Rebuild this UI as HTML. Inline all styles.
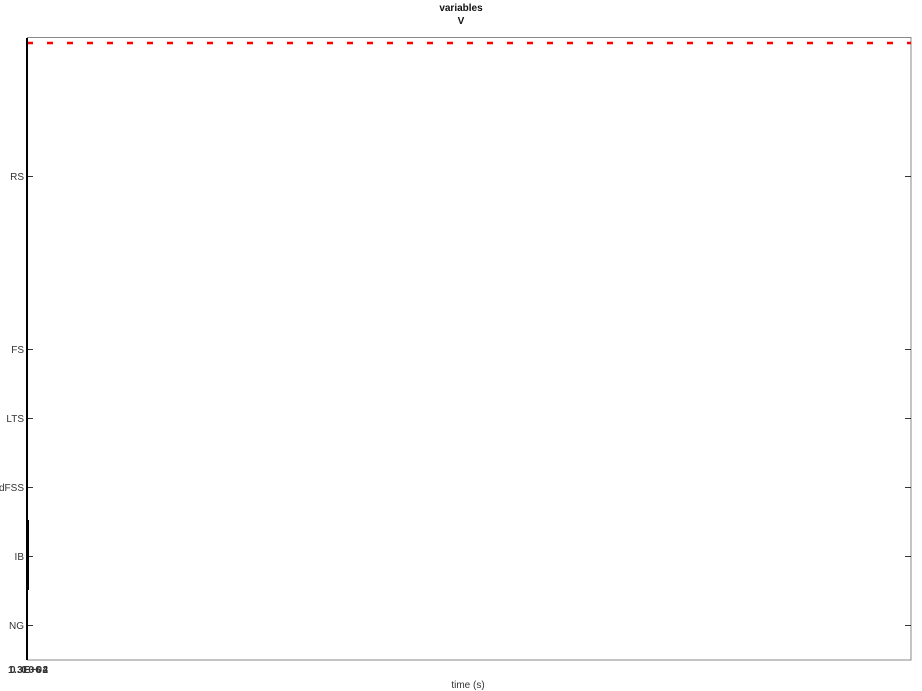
<!DOCTYPE html>
<html><head><meta charset="utf-8"><style>
html,body{margin:0;padding:0;background:#fff;}
svg{display:block;font-family:"Liberation Sans",sans-serif;}
</style></head><body>
<svg width="922" height="691" viewBox="0 0 922 691" xmlns="http://www.w3.org/2000/svg">
<rect x="0" y="0" width="922" height="691" fill="#fff"/>
<text x="461" y="11" font-size="10" font-weight="bold" text-anchor="middle" fill="#111">variables</text>
<text x="461" y="24" font-size="10" font-weight="bold" text-anchor="middle" fill="#111">V</text>
<rect x="27.5" y="37.5" width="883.5" height="622.5" fill="none" stroke="#888" stroke-width="1"/>
<g stroke="#333" stroke-width="1">
<line x1="27" y1="176.5" x2="33" y2="176.5"/><line x1="905" y1="176.5" x2="911" y2="176.5"/>
<line x1="27" y1="349.5" x2="33" y2="349.5"/><line x1="905" y1="349.5" x2="911" y2="349.5"/>
<line x1="27" y1="418.5" x2="33" y2="418.5"/><line x1="905" y1="418.5" x2="911" y2="418.5"/>
<line x1="27" y1="487.5" x2="33" y2="487.5"/><line x1="905" y1="487.5" x2="911" y2="487.5"/>
<line x1="27" y1="556.5" x2="33" y2="556.5"/><line x1="905" y1="556.5" x2="911" y2="556.5"/>
<line x1="27" y1="625.5" x2="33" y2="625.5"/><line x1="905" y1="625.5" x2="911" y2="625.5"/>
</g>
<line x1="27" y1="43" x2="911" y2="43" stroke="#f00" stroke-width="2.5" stroke-dasharray="6 14"/>
<line x1="27" y1="38" x2="27" y2="660" stroke="#000" stroke-width="2"/>
<line x1="27.5" y1="520" x2="27.5" y2="590" stroke="#000" stroke-width="3"/>
<g font-size="10" text-anchor="end" fill="#333">
<text x="24" y="180">RS</text>
<text x="24" y="353">FS</text>
<text x="24" y="422">LTS</text>
<text x="24" y="491">dFSS</text>
<text x="24" y="560">IB</text>
<text x="24" y="629">NG</text>
</g>
<g font-size="10" font-weight="bold" fill="#333">
<text x="8" y="673" textLength="40">1.3E+04</text>
<text x="10" y="673" textLength="38">0.0062</text>
</g>
<text x="468" y="688" font-size="10" text-anchor="middle" fill="#333">time (s)</text>
</svg>
</body></html>
